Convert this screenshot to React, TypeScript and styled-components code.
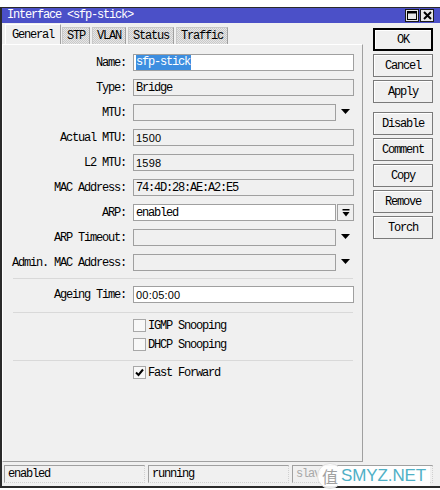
import styled, { createGlobalStyle } from "styled-components";

const mono = `"Liberation Mono", Cousine, "Courier New", "Nimbus Mono PS", monospace`;

const GlobalStyle = createGlobalStyle`
  html, body {
    margin: 0;
    background: #ffffff;
  }
  * {
    box-sizing: border-box;
  }
`;

type Field = {
  label: string;
  value?: string;
  editable?: boolean;
  selected?: boolean;
  arrow?: boolean;
  button?: boolean;
  sans?: boolean;
};

const fields: Field[] = [
  { label: "Name:", value: "sfp-stick", editable: true, selected: true },
  { label: "Type:", value: "Bridge" },
  { label: "MTU:", arrow: true },
  { label: "Actual MTU:", value: "1500", sans: true },
  { label: "L2 MTU:", value: "1598", sans: true },
  { label: "MAC Address:", value: "74:4D:28:AE:A2:E5" },
  { label: "ARP:", value: "enabled", editable: true, button: true },
  { label: "ARP Timeout:", arrow: true },
  { label: "Admin. MAC Address:", arrow: true },
];

const buttons = [
  { text: "OK", primary: true },
  { text: "Cancel" },
  { text: "Apply" },
  { text: "Disable", spaced: true },
  { text: "Comment" },
  { text: "Copy" },
  { text: "Remove" },
  { text: "Torch" },
];

const tabs = ["General", "STP", "VLAN", "Status", "Traffic"];

function DownArrow() {
  return (
    <svg width="9" height="5" viewBox="0 0 9 5">
      <polygon points="0,0 9,0 4.5,5" fill="#000" />
    </svg>
  );
}

function BarArrow() {
  return (
    <svg width="8" height="8" viewBox="0 0 8 8">
      <rect x="0.5" y="0" width="7" height="1.5" fill="#000" />
      <polygon points="0.5,3 7.5,3 4,7.5" fill="#000" />
    </svg>
  );
}

function Tick() {
  return (
    <svg width="11" height="11" viewBox="0 0 11 11">
      <path d="M2 5.5 L4.5 8 L9 2.5" stroke="#000" strokeWidth="2" fill="none" />
    </svg>
  );
}

export default function App() {
  return (
    <>
      <GlobalStyle />
      <Page>
        <Window>
          <TitleBar>
            <TitleText>Interface &lt;sfp-stick&gt;</TitleText>
            <TitleButton>
              <svg width="10" height="9" viewBox="0 0 10 9">
                <rect x="0.5" y="0.5" width="9" height="8" fill="none" stroke="#000" />
                <rect x="0.5" y="0.5" width="9" height="2" fill="#000" />
              </svg>
            </TitleButton>
            <TitleButton>
              <svg width="9" height="9" viewBox="0 0 9 9">
                <path d="M1 1 L8 8 M8 1 L1 8" stroke="#000" strokeWidth="2" />
              </svg>
            </TitleButton>
          </TitleBar>

          <Main>
            <LeftPane>
              <TabRow>
                {tabs.map((t, i) => (
                  <Tab key={t} $active={i === 0}>
                    {t}
                  </Tab>
                ))}
              </TabRow>
              <Panel>
                <Rows>
                  {fields.map((f) => (
                    <FormRow key={f.label}>
                      <Label>{f.label}</Label>
                      <Control>
                        <Input $editable={!!f.editable} $sans={!!f.sans}>
                          {f.selected ? <Selected>{f.value}</Selected> : f.value}
                        </Input>
                        {f.arrow && (
                          <ArrowSlot>
                            <DownArrow />
                          </ArrowSlot>
                        )}
                        {f.button && (
                          <DropButton>
                            <BarArrow />
                          </DropButton>
                        )}
                      </Control>
                    </FormRow>
                  ))}
                </Rows>
                <Separator $top={7} $bottom={7} />
                <FormRow>
                  <Label>Ageing Time:</Label>
                  <Control>
                    <Input $editable $sans>
                      00:05:00
                    </Input>
                  </Control>
                </FormRow>
                <Separator $top={9} $bottom={3} />
                <CheckRow>
                  <CheckBox />
                  IGMP Snooping
                </CheckRow>
                <CheckRow>
                  <CheckBox />
                  DHCP Snooping
                </CheckRow>
                <Separator $top={6} $bottom={2} />
                <CheckRow>
                  <CheckBox>
                    <Tick />
                  </CheckBox>
                  Fast Forward
                </CheckRow>
              </Panel>
            </LeftPane>

            <ButtonColumn>
              {buttons.map((b) => (
                <SideButton key={b.text} $primary={!!b.primary} $spaced={!!b.spaced}>
                  {b.text}
                </SideButton>
              ))}
            </ButtonColumn>
          </Main>

          <StatusBar>
            <StatusField>enabled</StatusField>
            <StatusField>running</StatusField>
            <StatusField $muted>slav</StatusField>
          </StatusBar>

          <Badge>值</Badge>
          <Watermark>SMYZ.NET</Watermark>
        </Window>
      </Page>
    </>
  );
}

const Page = styled.div`
  width: 440px;
  height: 490px;
  padding-top: 7px;
  background: #ffffff;
`;

const Window = styled.div`
  position: relative;
  width: 440px;
  height: 481px;
  background: #f0f0f0;
  border-top: 1px solid #2a2a2a;
  border-left: 2px solid #2a2a2a;
  border-bottom: 2px solid #2a2a2a;
  display: flex;
  flex-direction: column;
  font-family: ${mono};
  font-size: 12px;
  letter-spacing: -1.2px;
  color: #000;
`;

const TitleBar = styled.div`
  height: 15px;
  background: #4b50c8;
  display: flex;
  align-items: center;
  padding: 0 6px 0 5px;
  gap: 1px;
`;

const TitleText = styled.div`
  color: #ffffff;
  flex: 1;
  line-height: 15px;
`;

const TitleButton = styled.div`
  width: 14px;
  height: 13px;
  background: #e8e8e8;
  border: 1px solid #1a1a1a;
  display: flex;
  align-items: center;
  justify-content: center;
`;

const Main = styled.div`
  display: flex;
  height: 439px;
`;

const LeftPane = styled.div`
  width: 361px;
  display: flex;
  flex-direction: column;
`;

const TabRow = styled.div`
  height: 21px;
  display: flex;
  align-items: flex-end;
  padding-left: 3px;
  gap: 1px;
`;

const Tab = styled.div<{ $active: boolean }>`
  height: ${(p) => (p.$active ? "20px" : "17px")};
  padding: ${(p) => (p.$active ? "0 6px" : "0 4px")};
  margin-right: ${(p) => (p.$active ? "0" : "1px")};
  display: flex;
  align-items: center;
  border: 1px solid ${(p) => (p.$active ? "#ffffff" : "#c8c8c8")};
  border-right-color: #a0a0a0;
  border-bottom: none;
  background: ${(p) =>
    p.$active
      ? "#f0f0f0"
      : "repeating-conic-gradient(#c9c9c9 0 25%, #e6e6e6 0 50%) 0 0 / 2px 2px"};
`;

const Panel = styled.div`
  flex: 1;
  border-top: 1px solid #ffffff;
  border-left: 1px solid #ffffff;
  border-right: 1px solid #a0a0a0;
  border-bottom: 1px solid #a0a0a0;
  padding-top: 9px;
`;

const Rows = styled.div`
  display: flex;
  flex-direction: column;
  gap: 8px;
`;

const FormRow = styled.div`
  display: grid;
  grid-template-columns: 123px 221px;
  column-gap: 7px;
  height: 17px;
  align-items: center;
`;

const Label = styled.div`
  text-align: right;
  white-space: nowrap;
`;

const Control = styled.div`
  display: flex;
  height: 17px;
`;

const Input = styled.div<{ $editable: boolean; $sans: boolean }>`
  flex: 1;
  height: 17px;
  border: 1px solid #a0a0a0;
  background: ${(p) => (p.$editable ? "#ffffff" : "#f0f0f0")};
  padding: 0 2px;
  display: flex;
  align-items: center;
  white-space: nowrap;
  font-family: ${(p) => (p.$sans ? `"Liberation Sans", Arial, sans-serif` : mono)};
  font-size: ${(p) => (p.$sans ? "11px" : "12px")};
  letter-spacing: ${(p) => (p.$sans ? "0.2px" : "-1.2px")};
`;

const Selected = styled.span`
  background: #3d8ee0;
  color: #ffffff;
  line-height: 15px;
  padding-right: 1px;
`;

const ArrowSlot = styled.div`
  width: 18px;
  display: flex;
  align-items: center;
  justify-content: center;
  padding-bottom: 3px;
`;

const DropButton = styled.div`
  width: 17px;
  margin-left: 1px;
  border: 1px solid #a0a0a0;
  background: #f0f0f0;
  display: flex;
  align-items: center;
  justify-content: center;
`;

const Separator = styled.div<{ $top: number; $bottom: number }>`
  height: 1px;
  width: 340px;
  margin: ${(p) => p.$top}px 0 ${(p) => p.$bottom}px 10px;
  background: #d9d9d9;
`;

const CheckRow = styled.div`
  height: 19px;
  display: flex;
  align-items: center;
  padding-left: 130px;
  gap: 2px;
`;

const CheckBox = styled.div`
  width: 13px;
  height: 13px;
  border: 1px solid #a8a8a8;
  background: #f8f8f8;
  display: flex;
  align-items: center;
  justify-content: center;
`;

const ButtonColumn = styled.div`
  flex: 1;
  display: flex;
  flex-direction: column;
  padding: 5px 0 0 10px;
  gap: 3px;
`;

const SideButton = styled.div<{ $primary: boolean; $spaced: boolean }>`
  width: 60px;
  height: 23px;
  margin-top: ${(p) => (p.$spaced ? "6px" : "0")};
  display: flex;
  align-items: center;
  justify-content: center;
  background: #f0f0f0;
  border: ${(p) => (p.$primary ? "2px solid #000" : "1px solid #7a7a7a")};
  box-shadow: inset 1px 1px #ffffff;
`;

const StatusBar = styled.div`
  flex: 1;
  display: flex;
  gap: 3px;
  padding: 3px 0 0 2px;
`;

const StatusField = styled.div<{ $muted?: boolean }>`
  width: 141px;
  height: 18px;
  display: flex;
  align-items: center;
  padding-left: 3px;
  border-top: 1px solid #a0a0a0;
  border-left: 1px solid #a0a0a0;
  border-right: 1px dotted #d0d0d0;
  border-bottom: 1px dotted #d0d0d0;
  color: ${(p) => (p.$muted ? "#a8a8a8" : "#000")};
`;

const Badge = styled.div`
  position: absolute;
  left: 315px;
  top: 455px;
  width: 26px;
  height: 26px;
  border-radius: 50%;
  background: rgba(255, 255, 255, 0.9);
  border: 1px solid #e0e0e0;
  display: flex;
  align-items: center;
  justify-content: center;
  font-family: "Noto Sans CJK SC", sans-serif;
  font-size: 16px;
  letter-spacing: 0;
  color: #a0a0a0;
`;

const Watermark = styled.div`
  position: absolute;
  left: 336px;
  top: 458px;
  width: 92px;
  height: 20px;
  background: rgba(255, 255, 255, 0.92);
  display: flex;
  align-items: center;
  padding-left: 3px;
  font-family: "Liberation Sans", Arial, sans-serif;
  font-size: 17px;
  letter-spacing: -0.1px;
  color: #4fb0c6;
`;
